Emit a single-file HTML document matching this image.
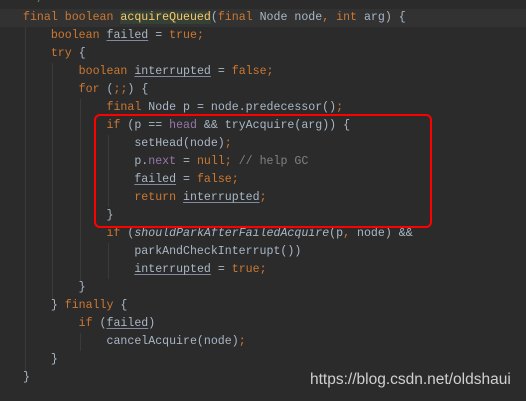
<!DOCTYPE html>
<html><head><style>
html,body{margin:0;padding:0;background:#2b2b2b;width:526px;height:401px;overflow:hidden;position:relative}
pre{position:absolute;left:23px;top:-9px;margin:0;font-family:"Liberation Mono",monospace;font-size:11.6px;line-height:18px;color:#a9b7c6;z-index:2}
.k{color:#cc7832}.f{color:#9876aa}.c{color:#808080}.m{color:#ffc66d;background:#344134}.u{text-decoration:underline;text-decoration-color:#7f8aa0;text-underline-offset:2px}.i{font-style:italic}.g{color:#629755}
.hl{position:absolute;left:0;top:9px;width:526px;height:18px;background:#323232}
.box{position:absolute;left:94px;top:114px;width:334px;height:110px;border:2.5px solid #f00;border-radius:6px;z-index:3}
.v{position:absolute;width:1px;background:#3a3a3a}
.wm{position:absolute;left:310px;top:371px;font-family:"Liberation Sans",sans-serif;font-size:15.5px;color:#d0d0d0;z-index:3}
</style></head><body>
<div class="hl"></div>
<div class="v" style="left:25px;top:27px;height:344px"></div>
<div class="v" style="left:52px;top:63px;height:236px"></div>
<div class="v" style="left:80px;top:99px;height:182px"></div>
<div class="v" style="left:108px;top:135px;height:72px"></div>
<div class="v" style="left:108px;top:243px;height:36px"></div>
<div class="v" style="left:80px;top:333px;height:18px"></div>
<pre><span class="g"> */</span>
<span class="k">final boolean </span><span class="m">acquireQueued</span>(<span class="k">final </span>Node node<span class="k">, int </span>arg) {
    <span class="k">boolean </span><span class="u">failed</span> = <span class="k">true;</span>
    <span class="k">try </span>{
        <span class="k">boolean </span><span class="u">interrupted</span> = <span class="k">false;</span>
        <span class="k">for </span>(<span class="k">;;</span>) {
            <span class="k">final </span>Node p = node.predecessor()<span class="k">;</span>
            <span class="k">if </span>(p == <span class="f">head </span>&amp;&amp; tryAcquire(arg)) {
                setHead(node)<span class="k">;</span>
                p.<span class="f">next </span>= <span class="k">null; </span><span class="c">// help GC</span>
                <span class="u">failed</span> = <span class="k">false;</span>
                <span class="k">return </span><span class="u">interrupted</span><span class="k">;</span>
            }
            <span class="k">if </span>(<span class="i">shouldParkAfterFailedAcquire</span>(p<span class="k">, </span>node) &amp;&amp;
                parkAndCheckInterrupt())
                <span class="u">interrupted</span> = <span class="k">true;</span>
        }
    } <span class="k">finally </span>{
        <span class="k">if </span>(<span class="u">failed</span>)
            cancelAcquire(node)<span class="k">;</span>
    }
}</pre>
<div class="box"></div>
<div class="wm">https://blog.csdn.net/oldshaui</div>
</body></html>
